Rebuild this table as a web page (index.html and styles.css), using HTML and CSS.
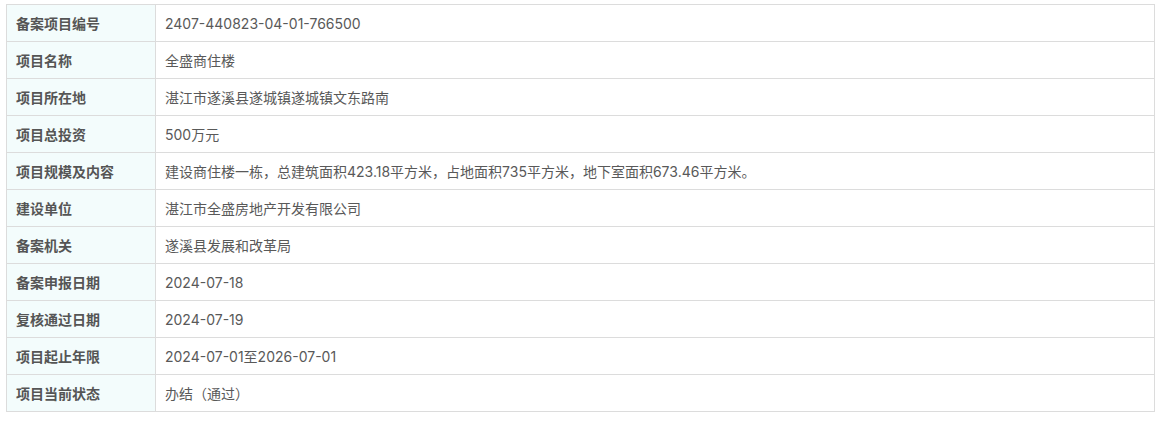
FILE: index.html
```html
<!DOCTYPE html>
<html lang="zh-CN">
<head>
    <meta charset="UTF-8">
    <title>备案项目信息</title>
    <link rel="stylesheet" href="styles.css">
</head>
<body>
    <table class="info-table">
        <tr><th>备案项目编号</th><td>2407-440823-04-01-766500</td></tr>
        <tr><th>项目名称</th><td>全盛商住楼</td></tr>
        <tr><th>项目所在地</th><td>湛江市遂溪县遂城镇遂城镇文东路南</td></tr>
        <tr><th>项目总投资</th><td>500万元</td></tr>
        <tr><th>项目规模及内容</th><td>建设商住楼一栋，总建筑面积423.18平方米，占地面积735平方米，地下室面积673.46平方米。</td></tr>
        <tr><th>建设单位</th><td>湛江市全盛房地产开发有限公司</td></tr>
        <tr><th>备案机关</th><td>遂溪县发展和改革局</td></tr>
        <tr><th>备案申报日期</th><td>2024-07-18</td></tr>
        <tr><th>复核通过日期</th><td>2024-07-19</td></tr>
        <tr><th>项目起止年限</th><td>2024-07-01至2026-07-01</td></tr>
        <tr><th>项目当前状态</th><td>办结（通过）</td></tr>
    </table>
</body>
</html>
```

FILE: styles.css
```css
* {
    margin: 0;
    padding: 0;
    box-sizing: border-box;
}

body {
    padding: 4px 6px;
    background: #fff;
    font-family: "Inter", "Noto Sans CJK SC", sans-serif;
    font-size: 14px;
    color: #555;
}

.info-table {
    width: 1149px;
    border-collapse: collapse;
    table-layout: fixed;
}

.info-table th,
.info-table td {
    height: 37px;
    border: 1px solid #dcdcdc;
    padding: 0 9px;
    text-align: left;
    vertical-align: middle;
}

.info-table th {
    width: 149px;
    background: #f3fcfc;
    font-family: "Noto Sans CJK SC", sans-serif;
    font-weight: bold;
    color: #555;
}

.info-table td {
    color: #595959;
}
```
